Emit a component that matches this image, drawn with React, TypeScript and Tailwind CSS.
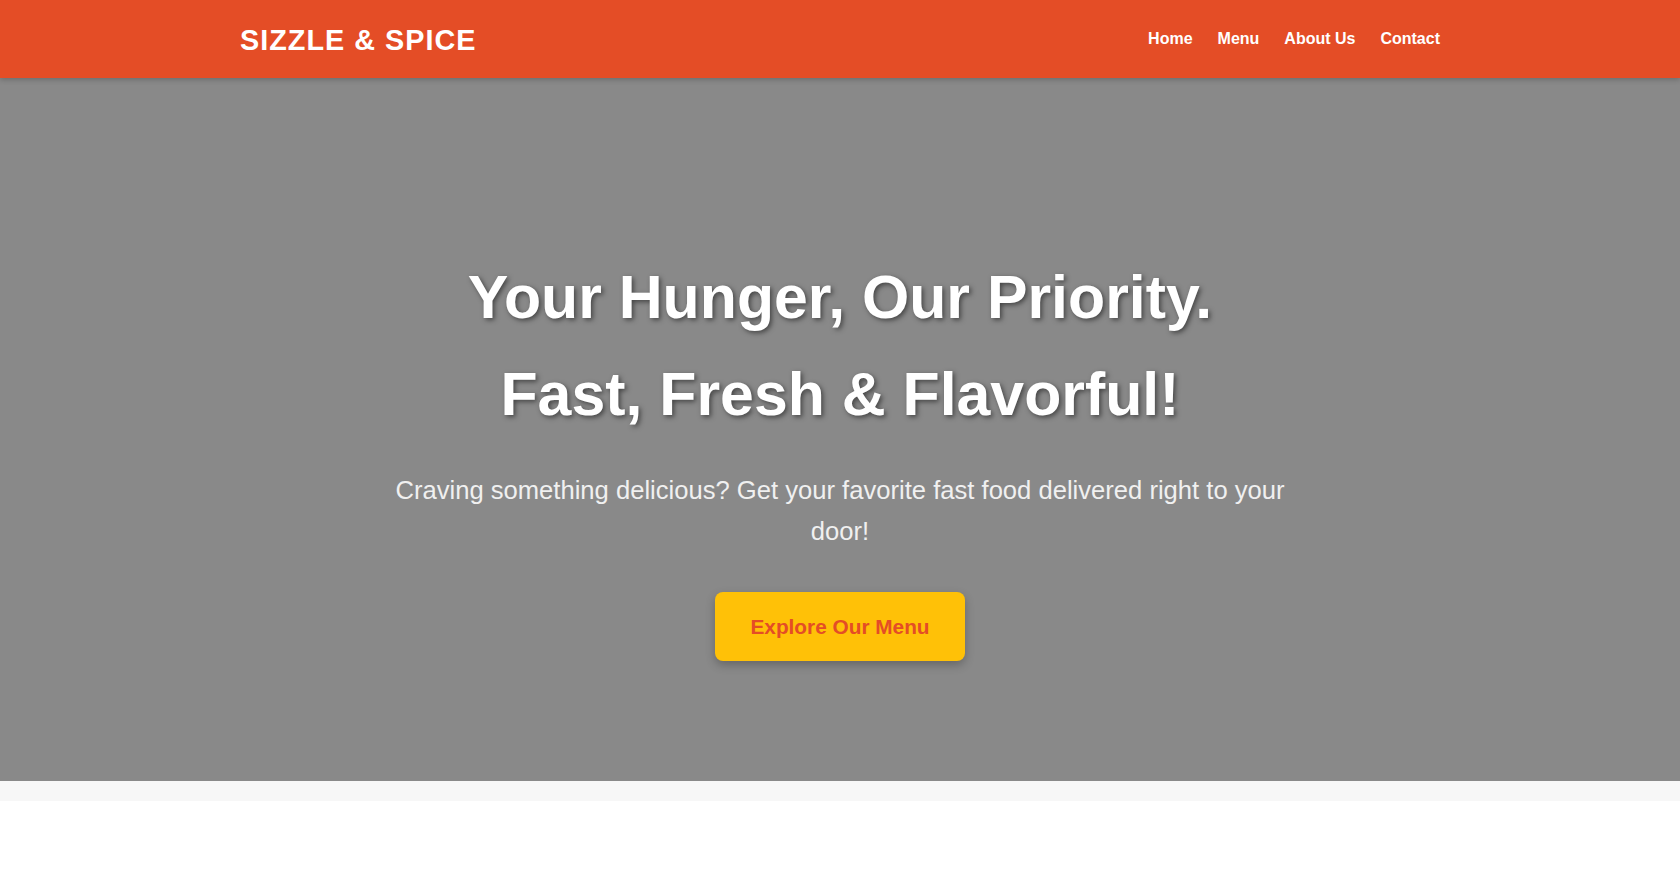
const navLinks = ["Home", "Menu", "About Us", "Contact"];

function Header() {
  return (
    <header className="relative z-10 h-[78px] bg-[#e44d26] shadow-[0_2px_5px_rgba(0,0,0,0.2)]">
      <div className="mx-auto flex h-full max-w-[1200px] items-center justify-between">
        <div className="pt-[2px] text-[28.8px] font-bold tracking-[1px] text-white">
          SIZZLE &amp; SPICE
        </div>
        <nav>
          <ul className="flex gap-[25px]">
            {navLinks.map((link) => (
              <li key={link}>
                <a href="#" className="text-base font-bold text-white">
                  {link}
                </a>
              </li>
            ))}
          </ul>
        </nav>
      </div>
    </header>
  );
}

function Hero() {
  return (
    <section className="flex h-[703px] flex-col items-center bg-[#898989] pt-[171px] text-center">
      <h1 className="text-[60.8px] font-bold leading-[97px] text-white [text-shadow:2px_2px_5px_rgba(0,0,0,0.5)]">
        Your Hunger, Our Priority.
        <br />
        Fast, Fresh &amp; Flavorful!
      </h1>
      <p className="mt-[27px] max-w-[900px] text-[25.6px] leading-[1.6] text-[#f0f0f0]">
        Craving something delicious? Get your favorite fast food delivered right to your door!
      </p>
      <a
        href="#"
        className="mt-[40px] rounded-lg bg-[#ffc107] px-[35px] py-[18px] text-[20.8px] font-bold leading-[1.6] text-[#e44d26] shadow-[0_4px_10px_rgba(0,0,0,0.25)]"
      >
        Explore Our Menu
      </a>
    </section>
  );
}

export default function App() {
  return (
    <div className="min-h-screen bg-white font-['Liberation_Sans',Arial,sans-serif] leading-[1.6]">
      <Header />
      <Hero />
      <div className="h-[20px] bg-[#f7f7f7]" />
    </div>
  );
}
